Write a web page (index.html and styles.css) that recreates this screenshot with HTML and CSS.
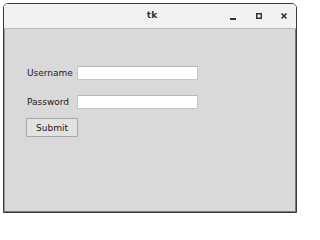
FILE: index.html
```html
<!DOCTYPE html>
<html>
<head>
<meta charset="utf-8">
<link rel="stylesheet" href="styles.css">
</head>
<body>
<div class="window">
  <div class="titlebar">
    <span class="title">tk</span>
    <div class="controls">
      <svg class="ctl" width="8" height="8" viewBox="0 0 8 8"><rect x="1" y="5" width="6" height="2" fill="#2e3436"/></svg>
      <svg class="ctl" width="8" height="8" viewBox="0 0 8 8"><rect x="1.75" y="0.75" width="4.5" height="4.5" fill="none" stroke="#2e3436" stroke-width="1.5"/></svg>
      <svg class="ctl" width="8" height="8" viewBox="0 0 8 8"><path d="M1.5 0.5 L6.5 5.5 M6.5 0.5 L1.5 5.5" stroke="#2e3436" stroke-width="1.6"/></svg>
    </div>
  </div>
  <div class="content">
    <div class="form">
      <label class="lbl">Username</label>
      <div class="entry"></div>
      <label class="lbl">Password</label>
      <div class="entry"></div>
      <button class="btn">Submit</button>
    </div>
  </div>
</div>
</body>
</html>
```
FILE: styles.css
```css
html, body {
  margin: 0;
  padding: 0;
  background: #ffffff;
}
.window {
  margin: 3px 0 0 3px;
  width: 292px;
  height: 208px;
  border: 1px solid #3a3a3a;
  border-radius: 5px 5px 0 0;
  overflow: hidden;
  display: flex;
  flex-direction: column;
  font-family: "DejaVu Sans", sans-serif;
}
.titlebar {
  height: 24px;
  flex: none;
  background: #f2f2f2;
  border-bottom: 1px solid #bdbdbd;
  display: flex;
  align-items: center;
  position: relative;
}
.title {
  position: absolute;
  left: 0;
  right: 0;
  text-align: center;
  font-size: 9px;
  font-weight: bold;
  color: #2e3436;
  top: 6px;
  padding-left: 4px;
}
.controls {
  margin-left: auto;
  display: flex;
  gap: 17px;
  margin-right: 8px;
  padding-top: 2px;
}
.ctl {
  display: block;
  width: 8px;
  height: 8px;
}
.controls .ctl:first-child {
  margin-right: 1px;
}
.content {
  flex: 1;
  background: #d9d9d9;
  padding: 37px 0 0 22px;
  box-shadow: inset -1px -1px 0 #7a7a7a, inset 1px 0 0 #9a9a9a;
}
.form {
  display: grid;
  grid-template-columns: 51px 121px;
  grid-auto-rows: 14px;
  row-gap: 15px;
  align-items: center;
}
.lbl {
  font-size: 9px;
  color: #1a1a1a;
  padding-left: 1px;
  line-height: 14px;
}
.entry {
  height: 12px;
  background: #ffffff;
  border: 1px solid #c6c6c6;
  border-top-color: #b8b8b8;
}
.btn {
  grid-column: 1;
  margin-top: -6px;
  width: 52px;
  height: 19px;
  align-self: start;
  background: #e2e2e2;
  border: 1px solid #a8a8a8;
  font-family: "DejaVu Sans", sans-serif;
  font-size: 9px;
  color: #1a1a1a;
  padding: 0;
  margin-left: 0;
}
```
